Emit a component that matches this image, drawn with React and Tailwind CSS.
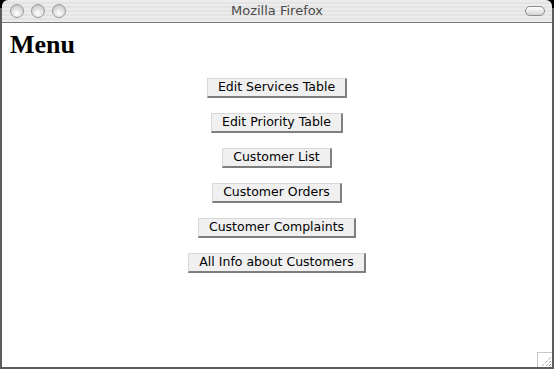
import React from "react";

const buttons = [
  "Edit Services Table",
  "Edit Priority Table",
  "Customer List",
  "Customer Orders",
  "Customer Complaints",
  "All Info about Customers",
];

function Light() {
  return (
    <div className="w-[14px] h-[14px] rounded-full border border-[#9a9a9a] bg-[radial-gradient(circle_at_50%_70%,#ffffff_0%,#e2e2e2_45%,#b8b8b8_100%)]" />
  );
}

export default function App() {
  return (
    <div className="w-[554px] h-[369px] bg-[#5c5c5c] relative overflow-hidden">
      <div className="absolute left-0 top-0 w-[8px] h-[8px] bg-black" />
      <div className="absolute right-0 top-0 w-[8px] h-[8px] bg-black" />
      <div className="relative flex flex-col h-full px-[2px] pb-[2px]">
        <div className="h-[23px] rounded-t-[6px] border-b border-[#7a7a7a] bg-[repeating-linear-gradient(180deg,#ececec_0px,#ececec_2px,#e3e3e3_2px,#e3e3e3_4px)] flex items-center relative">
          <div className="flex gap-[7px] pl-[8px]">
            <Light />
            <Light />
            <Light />
          </div>
          <div className="absolute inset-0 flex items-center justify-center text-[13px] text-[#4a4a4a] font-['Lucida_Grande','DejaVu_Sans',sans-serif]">
            Mozilla Firefox
          </div>
          <div className="ml-auto mr-[7px] w-[20px] h-[10px] rounded-full border border-[#8a8a8a] bg-[linear-gradient(180deg,#ffffff,#d4d4d4)]" />
        </div>
        <div className="flex-1 bg-white relative">
          <h1 className="font-['Liberation_Serif',serif] font-bold text-[26px] leading-none text-black pl-[8px] pt-[9px]">
            Menu
          </h1>
          <div className="flex flex-col items-center gap-[15px] pt-[20px]">
            {buttons.map((b) => (
              <button
                key={b}
                className="h-[20px] px-[10px] bg-[#f0f0f0] border-t border-l border-t-[#d8d8d8] border-l-[#d8d8d8] border-r-2 border-b-2 border-r-[#7f7f7f] border-b-[#7f7f7f] text-[12.5px] leading-none text-black font-['DejaVu_Sans',sans-serif] whitespace-nowrap"
              >
                {b}
              </button>
            ))}
          </div>
          <div className="absolute right-0 bottom-0 w-[15px] h-[15px] border-l border-t border-[#c8c8c8] bg-white">
            <svg width="14" height="14" viewBox="0 0 14 14">
              <line x1="4" y1="13" x2="13" y2="4" stroke="#888" strokeWidth="1" strokeDasharray="1 1" />
              <line x1="8" y1="13" x2="13" y2="8" stroke="#888" strokeWidth="1" strokeDasharray="1 1" />
              <line x1="11" y1="13" x2="13" y2="11" stroke="#888" strokeWidth="1" />
            </svg>
          </div>
        </div>
      </div>
    </div>
  );
}
